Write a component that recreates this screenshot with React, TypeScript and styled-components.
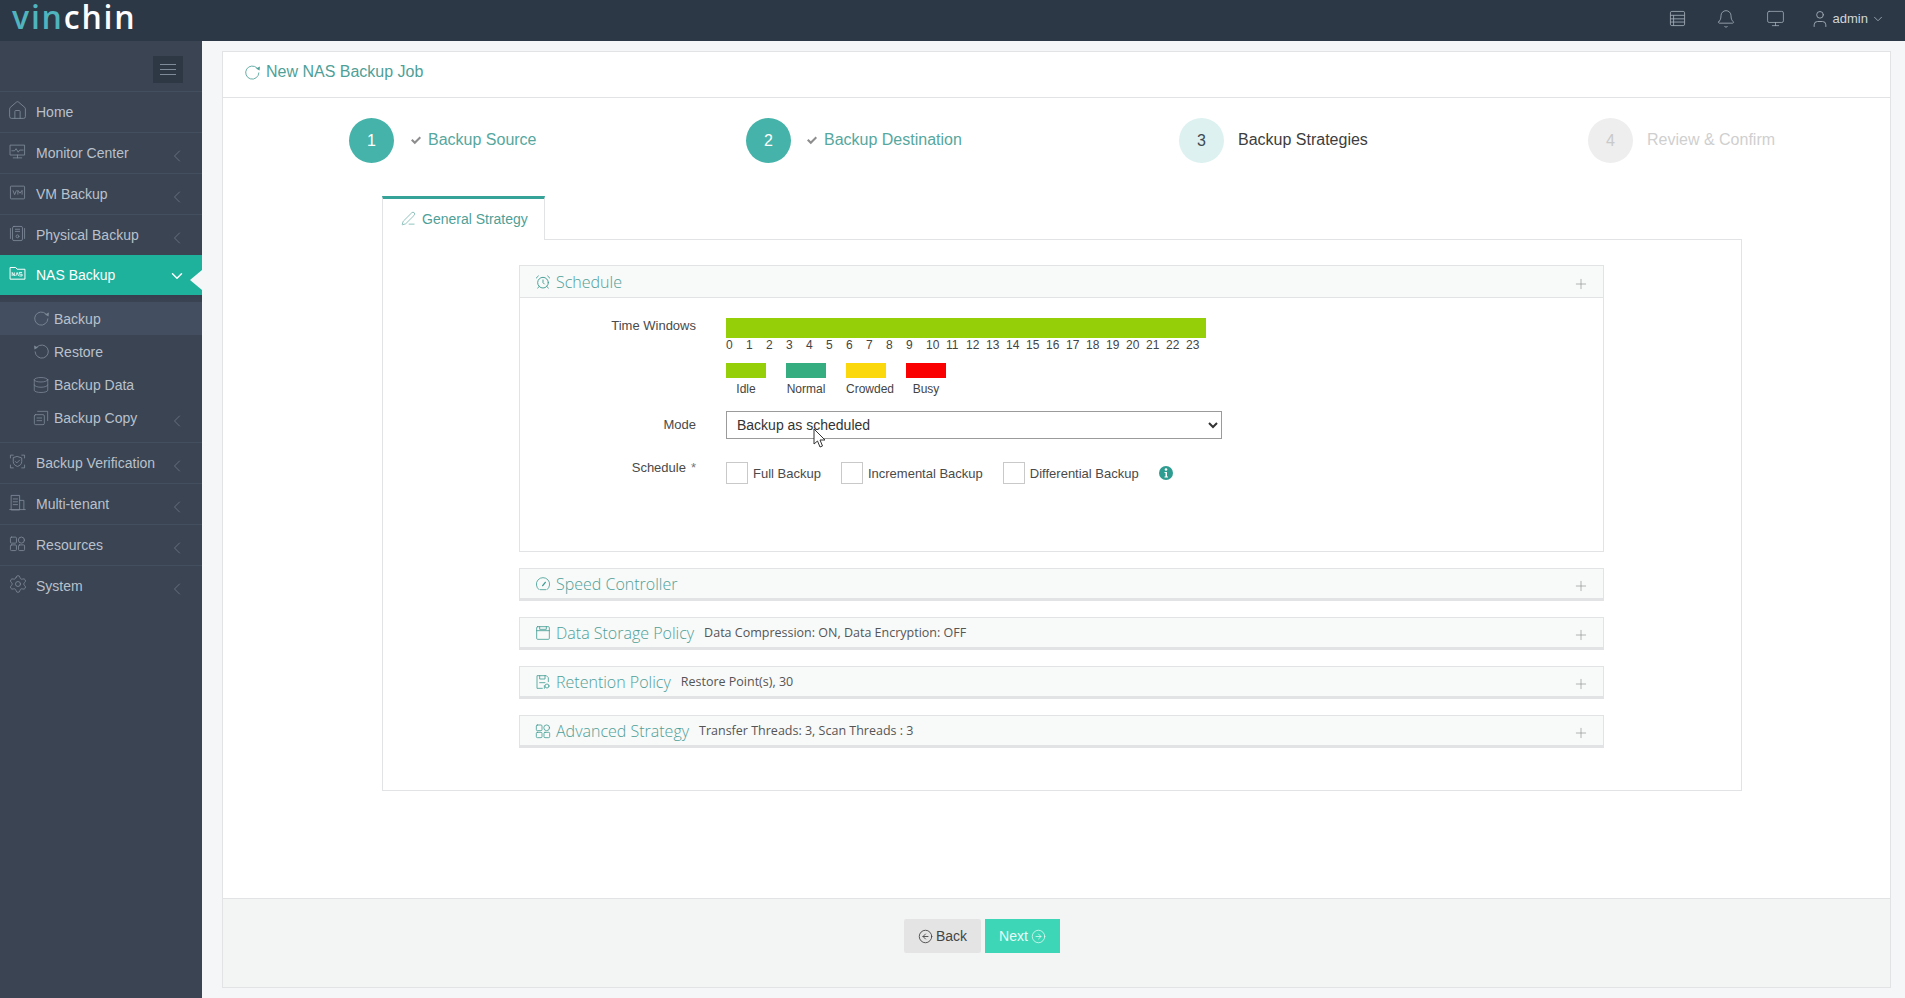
import React from 'react'
import styled, { createGlobalStyle } from 'styled-components'
import {
  AlarmClock,
  Bell,
  ChevronDown,
  ChevronLeft,
  CircleArrowLeft,
  CircleArrowRight,
  Database,
  House,
  Monitor,
  PenLine,
  Plus,
  Settings,
  User,
} from 'lucide-react'

const GlobalStyle = createGlobalStyle`
  * { box-sizing: border-box; }
  html, body { margin: 0; height: 100%; }
  body {
    background: #f5f6f7;
    font-family: "Liberation Sans", Arial, sans-serif;
    overflow: hidden;
  }
`

const Page = styled.div`
  height: 998px;
  display: grid;
  grid-template-rows: 41px 1fr;
  grid-template-columns: 202px 1fr;
`

/* top bar */
const TopBar = styled.header`
  grid-column: 1 / 3;
  background: #2c3846;
  display: flex;
  align-items: center;
  padding: 0 20px 0 12px;
  color: #a3adb8;
`

const Logo = styled.div`
  font-family: "Open Sans", sans-serif;
  font-size: 32px;
  font-weight: 600;
  line-height: 34px;
  letter-spacing: 1.8px;
  color: #fff;
  margin-top: -7px;
  span { color: #4fb4bd; }
`

const TopIcons = styled.div`
  margin-left: auto;
  margin-top: -4px;
  display: flex;
  align-items: center;
`

const TopIcon = styled.span<{ $gap: number }>`
  display: flex;
  margin-right: ${p => p.$gap}px;
`

const AdminName = styled.span`
  font-size: 13px;
  color: #cfd6dc;
  margin: 0 3px 0 3px;
`

/* side bar */
const Side = styled.nav`
  background: #3a4453;
  color: #b9c1cc;
  font-size: 14px;
`

const ToggleRow = styled.div`
  height: 51px;
  padding: 15px 19px 0 0;
  display: flex;
  justify-content: flex-end;
  border-bottom: 1px solid #434e5e;
`

const ToggleButton = styled.div`
  width: 30px;
  height: 27px;
  background: #2e3845;
  display: flex;
  flex-direction: column;
  justify-content: center;
  align-items: center;
  gap: 4px;
  i {
    display: block;
    width: 16px;
    height: 1px;
    background: #7f8a99;
  }
`

const NavRow = styled.div<{ $active?: boolean }>`
  position: relative;
  height: ${p => (p.$active ? 40 : 41)}px;
  margin-top: ${p => (p.$active ? -1 : 0)}px;
  display: flex;
  align-items: center;
  padding: 0 15px 0 9px;
  background: ${p => (p.$active ? '#1eb19c' : 'transparent')};
  color: ${p => (p.$active ? '#fff' : '#b9c1cc')};
  border-bottom: ${p => (p.$active ? '0' : '1px solid #434e5e')};
  &:last-child {
    height: 40px;
    border-bottom: 0;
  }
  &::after {
    content: '';
    display: ${p => (p.$active ? 'block' : 'none')};
    position: absolute;
    right: 0;
    top: 15px;
    border: 10px solid transparent;
    border-left-width: 0;
    border-right: 12px solid #f5f6f7;
  }
`

const NavIcon = styled.span<{ $active?: boolean }>`
  width: 17px;
  height: 17px;
  margin: -4px 10px 0 0;
  display: flex;
  align-items: center;
  justify-content: center;
  color: ${p => (p.$active ? '#fff' : '#7f8a99')};
  svg { flex: none; }
`

const Arrow = styled.span<{ $active?: boolean }>`
  margin-left: auto;
  display: flex;
  margin-top: ${p => (p.$active ? 2 : 6)}px;
  margin-right: ${p => (p.$active ? 1 : 0)}px;
  color: ${p => (p.$active ? '#fff' : '#6f7a89')};
`

const SubList = styled.div`
  padding-top: 7px;
  height: 148px;
  background: linear-gradient(#353f4d 0, #3a4453 8px);
  border-bottom: 1px solid #434e5e;
`

const SubRow = styled.div<{ $current?: boolean }>`
  height: 33px;
  display: flex;
  align-items: center;
  padding: 0 15px 0 33px;
  background: ${p => (p.$current ? '#434f60' : 'transparent')};
`

const SubIcon = styled.span`
  width: 16px;
  height: 16px;
  margin-right: 5px;
  display: flex;
  align-items: center;
  justify-content: center;
  color: #7f8a99;
  svg { flex: none; }
`

/* main */
const Main = styled.main`
  padding: 10px 14px 10px 20px;
  min-width: 0;
`

const Panel = styled.section`
  height: 100%;
  background: #fff;
  border: 1px solid #e2e3e4;
  display: flex;
  flex-direction: column;
`

const PanelHead = styled.h1`
  margin: 0;
  height: 46px;
  flex: none;
  border-bottom: 1px solid #e2e3e4;
  padding: 0 0 5px 21px;
  display: flex;
  align-items: center;
  gap: 5px;
  font-size: 16px;
  font-weight: 400;
  color: #4f9f97;
`

const Steps = styled.div`
  display: flex;
  padding: 20px 0 0 126px;
  height: 98px;
  flex: none;
`

const Step = styled.div<{ $width: number; $gap: number }>`
  width: ${p => p.$width}px;
  display: flex;
  align-items: flex-start;
  gap: ${p => p.$gap}px;
`

const StepCircle = styled.span<{ $state: 'done' | 'now' | 'todo' }>`
  width: 45px;
  height: 45px;
  flex: none;
  border-radius: 50%;
  display: flex;
  align-items: center;
  justify-content: center;
  font-size: 16px;
  background: ${p => ({ done: '#45b3a9', now: '#dcf1f0', todo: '#eeeeee' }[p.$state])};
  color: ${p => ({ done: '#fff', now: '#3e4a52', todo: '#c9c9c9' }[p.$state])};
`

const StepLabel = styled.span<{ $state: 'done' | 'now' | 'todo' }>`
  height: 43px;
  display: flex;
  align-items: center;
  gap: 6px;
  font-size: 16px;
  color: ${p => ({ done: '#56a79e', now: '#3d3d3d', todo: '#cfcfcf' }[p.$state])};
  svg { color: #8d8d8d; }
`

const Tabs = styled.div`
  margin: 0 148px 0 159px;
  flex: none;
`

const TabHead = styled.div`
  width: 163px;
  height: 44px;
  margin-bottom: -1px;
  position: relative;
  z-index: 1;
  background: #fff;
  border-top: 3px solid #36a398;
  border-left: 1px solid #e2e3e4;
  border-right: 1px solid #e2e3e4;
  padding: 0 0 2px 18px;
  display: flex;
  align-items: center;
  gap: 6px;
  font-size: 14px;
  color: #4f9f97;
`

const TabBody = styled.div`
  height: 552px;
  border: 1px solid #e2e3e4;
  padding: 25px 137px 0 136px;
`

const Acc = styled.div<{ $open?: boolean }>`
  border: 1px solid #e2e3e4;
  border-bottom: ${p => (p.$open ? 1 : 3)}px solid #e2e3e4;
  margin-bottom: 16px;
  background: #fff;
`

const AccHead = styled.div<{ $open?: boolean }>`
  height: ${p => (p.$open ? 32 : 29)}px;
  background: #f8f9f9;
  border-bottom: ${p => (p.$open ? '1px solid #e2e3e4' : '0')};
  display: flex;
  align-items: center;
  padding: 0 14px 0 15px;
  color: #3d9c92;
`

const AccTitle = styled.span`
  font-family: "Open Sans", sans-serif;
  font-size: 16px;
  font-weight: 300;
  margin-left: 5px;
  color: #4f9f97;
`

const AccNote = styled.span`
  font-family: "Open Sans", sans-serif;
  font-size: 12.5px;
  color: #555;
  margin-left: 10px;
`

const PlusMark = styled.span`
  margin-left: auto;
  margin-top: 4px;
  display: flex;
  color: #8e8e8e;
`

const AccBody = styled.div`
  height: 253px;
  padding-top: 20px;
  position: relative;
`

const FormRow = styled.div`
  display: grid;
  grid-template-columns: 176px 1fr;
  column-gap: 30px;
  font-size: 12px;
  color: #444;
`

const FieldLabel = styled.label`
  text-align: right;
  font-size: 13px;
  line-height: 16px;
  color: #4a4a4a;
`

const Hours = styled.div`
  width: 480px;
`

const HourBar = styled.div`
  height: 20px;
  background: #95cf07;
`

const HourScale = styled.div`
  display: grid;
  grid-template-columns: repeat(24, 20px);
  line-height: 14px;
  margin-bottom: 11px;
`

const Legend = styled.div`
  display: flex;
  gap: 20px;
`

const LegendItem = styled.div<{ $color: string }>`
  width: 40px;
  white-space: nowrap;
  display: flex;
  flex-direction: column;
  align-items: center;
  line-height: 14px;
  &::before {
    content: '';
    align-self: stretch;
    height: 15px;
    margin-bottom: 4px;
    background: ${p => p.$color};
  }
`

const LegendText = styled.span<{ $shift: number }>`
  margin-left: ${p => p.$shift}px;
`

const ModeRow = styled(FormRow)`
  margin-top: 15px;
  align-items: center;
`

const ModeSelect = styled.select`
  width: 496px;
  height: 28px;
  padding-left: 6px;
  border: 1px solid #9b9b9b;
  background: #fff;
  color: #333;
  font-family: "Liberation Sans", Arial, sans-serif;
  font-size: 14px;
`

const Pointer = styled.svg`
  position: absolute;
  left: 293px;
  top: 130px;
`

const ScheduleRow = styled(FormRow)`
  margin-top: 23px;
  ${FieldLabel} { margin-top: -2px; }
`

const Checks = styled.div`
  display: flex;
  align-items: center;
  height: 22px;
  font-size: 13px;
  color: #4a4a4a;
`

const CheckBox = styled.span`
  width: 22px;
  height: 22px;
  border: 1px solid #c9c9c9;
  margin-right: 5px;
`

const CheckLabel = styled.span`
  margin-right: 20px;
`

const Star = styled.span`
  margin-left: 5px;
  color: #777;
`

const InfoDot = styled.svg`
  color: #2f9c91;
`

/* footer */
const Footer = styled.div`
  margin-top: auto;
  height: 89px;
  background: #f3f4f4;
  border-top: 1px solid #e2e3e4;
  padding: 20px 0 0 681px;
  display: flex;
  align-items: flex-start;
  gap: 4px;
`

const FootButton = styled.button<{ $primary?: boolean }>`
  height: 34px;
  width: ${p => (p.$primary ? 75 : 77)}px;
  border: 0;
  border-radius: ${p => (p.$primary ? 0 : 2)}px;
  background: ${p => (p.$primary ? '#3dd6b6' : '#e4e4e4')};
  color: ${p => (p.$primary ? '#e8fbf6' : '#444')};
  font-family: "Liberation Sans", Arial, sans-serif;
  font-size: 14px;
  display: flex;
  align-items: center;
  justify-content: center;
  gap: 3px;
  padding: 0;
`

/* drawn icons */
const Line = ({ children, size = 17 }: { children: React.ReactNode; size?: number }) => (
  <svg
    width={size}
    height={size}
    viewBox="0 0 24 24"
    fill="none"
    stroke="currentColor"
    strokeWidth="1.2"
    strokeLinecap="round"
    strokeLinejoin="round"
  >
    {children}
  </svg>
)

const Turn = ({ size = 17 }: { size?: number }) => (
  <Line size={size}>
    <path d="M21 12.500a9.300 9.300 0 1 1-2.700-7" />
    <path d="M22.500 3.500l-.6 5.500-4.900-2.500z" fill="currentColor" stroke="none" />
  </Line>
)

const TurnBack = () => (
  <Line size={17}>
    <path d="M3 12.500a9.300 9.300 0 1 0 2.700-7" />
    <path d="M1.500 3.500l.6 5.500 4.900-2.500z" fill="currentColor" stroke="none" />
  </Line>
)

const Screen = () => (
  <Line>
    <rect x="2" y="3" width="20" height="14" />
    <path d="M4 11h4l2-3 3 5 2-3h5M6 21h12M12 17v4" />
  </Line>
)

const VmBox = () => (
  <svg width="17" height="17" viewBox="0 0 24 24" fill="none" stroke="currentColor" strokeWidth="1.2">
    <rect x="2" y="3" width="20" height="18" rx="1" />
    <path d="M5.500 9l2.500 6 2.500-6M12.500 15V9l3 4 3-4v6" />
  </svg>
)

const Tower = () => (
  <Line>
    <rect x="5" y="2" width="14" height="20" rx="2" />
    <path d="M2 5v14M22 5v14M9 6h6M9 9h6" />
    <circle cx="12" cy="16" r="2" />
  </Line>
)

const NasFolder = () => (
  <svg width="17" height="17" viewBox="0 0 24 24" fill="none" stroke="currentColor" strokeWidth="1.4">
    <path d="M1.500 20V3.500h8l2 2.500h11V20z" />
    <path d="M4.500 15.500v-5l3 5v-5M9.500 15.500l2-5 2 5M14.500 15.500h4v-2.500h-4v-2.500h4" strokeWidth="1.200" />
  </svg>
)

const CopyStack = () => (
  <Line size={16}>
    <rect x="2" y="7" width="15" height="15" rx="2" />
    <path d="M7 2h15v14M6 12h7M6 16h7" />
  </Line>
)

const Shield = () => (
  <Line>
    <path d="M2 7V3h4M18 3h4v4M2 17v4h4M18 21h4v-4" />
    <path d="M12 5l6 2v5c0 4-3 6-6 7-3-1-6-3-6-7V7z" />
    <path d="M9 12l2 2 4-4" />
  </Line>
)

const Tenant = () => (
  <Line>
    <path d="M3 22V2h12v20zM15 9h6v13M1 22h22M6 7h6M6 11h6M6 15h6" />
  </Line>
)

const Blocks = ({ size = 17 }: { size?: number }) => (
  <Line size={size}>
    <rect x="2" y="3" width="8.500" height="8.500" rx="1.500" />
    <circle cx="17.500" cy="7.200" r="4.300" />
    <rect x="2" y="14" width="8.500" height="8" rx="1.500" />
    <rect x="13.500" y="14" width="8.500" height="8" rx="1.500" />
  </Line>
)

const ListSheet = () => (
  <svg width="17" height="17" viewBox="0 0 24 24" fill="none" stroke="currentColor" strokeWidth="1.200">
    <rect x="2" y="2" width="20" height="20" rx="2" />
    <path d="M2 7.500h20M2 12.500h20M2 17h20M6.500 7.500V22" />
  </svg>
)

const Floppy = () => (
  <Line size={16}>
    <rect x="2.500" y="2.500" width="19" height="19" rx="1.500" />
    <path d="M2.500 8.500h19M7 2.500v4h10v-4" />
  </Line>
)

const FloppyChart = () => (
  <Line size={16}>
    <path d="M11 21.500H3V2.500h14l3 3v6M7 2.500v5h8v-5M7 13h8" />
    <circle cx="18" cy="18" r="3" />
    <path d="M14 21.500v-4" />
  </Line>
)

const Dial = () => (
  <Line size={16}>
    <path d="M6 20.500a10 10 0 1 1 12 0" />
    <path d="M11.500 14.500l4-5" strokeWidth="2" />
    <path d="M8 20.500h8" />
  </Line>
)

const Tick = () => (
  <svg width="12" height="12" viewBox="0 0 12 12" fill="currentColor">
    <path d="M1 6.500l1.500-1.500 2.300 2.300L9.600 2.500 11 4 4.800 10.200z" />
  </svg>
)

const LeftArrow = () => <ChevronLeft size={20} strokeWidth={1} />

const navTop = [
  { label: 'Home', icon: <House size={21} strokeWidth={1} /> },
  { label: 'Monitor Center', icon: <Screen />, arrow: true },
  { label: 'VM Backup', icon: <VmBox />, arrow: true },
  { label: 'Physical Backup', icon: <Tower />, arrow: true },
]

const navSub = [
  { label: 'Backup', icon: <Turn />, current: true },
  { label: 'Restore', icon: <TurnBack /> },
  { label: 'Backup Data', icon: <Database size={18} strokeWidth={1} /> },
  { label: 'Backup Copy', icon: <CopyStack />, arrow: true },
]

const navRest = [
  { label: 'Backup Verification', icon: <Shield /> },
  { label: 'Multi-tenant', icon: <Tenant /> },
  { label: 'Resources', icon: <Blocks /> },
  { label: 'System', icon: <Settings size={20} strokeWidth={1} /> },
]

const steps = [
  { n: 1, label: 'Backup Source', state: 'done', width: 397, gap: 16 },
  { n: 2, label: 'Backup Destination', state: 'done', width: 433, gap: 15 },
  { n: 3, label: 'Backup Strategies', state: 'now', width: 409, gap: 14 },
  { n: 4, label: 'Review & Confirm', state: 'todo', width: 300, gap: 14 },
] as const

const legend = [
  { label: 'Idle', color: '#95cf07', shift: 0 },
  { label: 'Normal', color: '#36ad80', shift: 0 },
  { label: 'Crowded', color: '#fbd80c', shift: 8 },
  { label: 'Busy', color: '#fb0000', shift: 0 },
]

const closedPanels = [
  { title: 'Speed Controller', icon: <Dial /> },
  { title: 'Data Storage Policy', icon: <Floppy />, note: 'Data Compression: ON, Data Encryption: OFF' },
  { title: 'Retention Policy', icon: <FloppyChart />, note: 'Restore Point(s), 30' },
  { title: 'Advanced Strategy', icon: <Blocks size={16} />, note: 'Transfer Threads: 3, Scan Threads : 3' },
]

const App = () => {
  return (
    <Page>
      <GlobalStyle />
      <TopBar>
        <Logo>
          <span>vin</span>chin
        </Logo>
        <TopIcons>
          <TopIcon $gap={30}>
            <ListSheet />
          </TopIcon>
          <TopIcon $gap={30}>
            <Bell size={20} strokeWidth={1} />
          </TopIcon>
          <TopIcon $gap={25}>
            <Monitor size={19} strokeWidth={1} />
          </TopIcon>
          <TopIcon $gap={0}>
            <User size={20} strokeWidth={1.1} />
          </TopIcon>
          <AdminName>admin</AdminName>
          <ChevronDown size={14} strokeWidth={1.5} />
        </TopIcons>
      </TopBar>

      <Side>
        <ToggleRow>
          <ToggleButton>
            <i />
            <i />
            <i />
          </ToggleButton>
        </ToggleRow>
        {navTop.map(item => (
          <NavRow key={item.label}>
            <NavIcon>{item.icon}</NavIcon>
            {item.label}
            {item.arrow && (
              <Arrow>
                <LeftArrow />
              </Arrow>
            )}
          </NavRow>
        ))}
        <NavRow $active>
          <NavIcon $active>
            <NasFolder />
          </NavIcon>
          NAS Backup
          <Arrow $active>
            <ChevronDown size={18} strokeWidth={2} />
          </Arrow>
        </NavRow>
        <SubList>
          {navSub.map(item => (
            <SubRow key={item.label} $current={item.current}>
              <SubIcon>{item.icon}</SubIcon>
              {item.label}
              {item.arrow && (
                <Arrow>
                  <LeftArrow />
                </Arrow>
              )}
            </SubRow>
          ))}
        </SubList>
        {navRest.map(item => (
          <NavRow key={item.label}>
            <NavIcon>{item.icon}</NavIcon>
            {item.label}
            <Arrow>
              <LeftArrow />
            </Arrow>
          </NavRow>
        ))}
      </Side>

      <Main>
        <Panel>
          <PanelHead>
            <Turn />
            New NAS Backup Job
          </PanelHead>
          <Steps>
            {steps.map(step => (
              <Step key={step.n} $width={step.width} $gap={step.gap}>
                <StepCircle $state={step.state}>{step.n}</StepCircle>
                <StepLabel $state={step.state}>
                  {step.state === 'done' && <Tick />}
                  {step.label}
                </StepLabel>
              </Step>
            ))}
          </Steps>
          <Tabs>
            <TabHead>
              <PenLine size={15} strokeWidth={1} />
              General Strategy
            </TabHead>
            <TabBody>
              <Acc $open>
                <AccHead $open>
                  <AlarmClock size={16} strokeWidth={1.4} />
                  <AccTitle>Schedule</AccTitle>
                  <PlusMark>
                    <Plus size={16} strokeWidth={1} />
                  </PlusMark>
                </AccHead>
                <AccBody>
                  <FormRow>
                    <FieldLabel>Time Windows</FieldLabel>
                    <Hours>
                      <HourBar />
                      <HourScale>
                        {Array.from({ length: 24 }, (_, h) => (
                          <span key={h}>{h}</span>
                        ))}
                      </HourScale>
                      <Legend>
                        {legend.map(item => (
                          <LegendItem key={item.label} $color={item.color}>
                            <LegendText $shift={item.shift}>{item.label}</LegendText>
                          </LegendItem>
                        ))}
                      </Legend>
                    </Hours>
                  </FormRow>
                  <ModeRow>
                    <FieldLabel>Mode</FieldLabel>
                    <ModeSelect defaultValue="scheduled">
                      <option value="scheduled">Backup as scheduled</option>
                    </ModeSelect>
                  </ModeRow>
                  <Pointer width="14" height="20" viewBox="0 0 14 20">
                    <path d="M1 1v15l3.500-3 2.500 6 2.500-1-2.500-6h5z" fill="#fff" stroke="#333" strokeWidth="1" />
                  </Pointer>
                  <ScheduleRow>
                    <FieldLabel>
                      Schedule<Star>*</Star>
                    </FieldLabel>
                    <Checks>
                      <CheckBox />
                      <CheckLabel>Full Backup</CheckLabel>
                      <CheckBox />
                      <CheckLabel>Incremental Backup</CheckLabel>
                      <CheckBox />
                      <CheckLabel>Differential Backup</CheckLabel>
                      <InfoDot width="14" height="14" viewBox="0 0 14 14">
                        <circle cx="7" cy="7" r="7" fill="currentColor" />
                        <circle cx="7" cy="3.500" r="1.300" fill="#fff" />
                        <path d="M5.500 6h2.500v4.500h1v1H5.500v-1h1V7h-1z" fill="#fff" />
                      </InfoDot>
                    </Checks>
                  </ScheduleRow>
                </AccBody>
              </Acc>
              {closedPanels.map(panel => (
                <Acc key={panel.title}>
                  <AccHead>
                    {panel.icon}
                    <AccTitle>{panel.title}</AccTitle>
                    {panel.note && <AccNote>{panel.note}</AccNote>}
                    <PlusMark>
                      <Plus size={16} strokeWidth={1} />
                    </PlusMark>
                  </AccHead>
                </Acc>
              ))}
            </TabBody>
          </Tabs>
          <Footer>
            <FootButton>
              <CircleArrowLeft size={15} strokeWidth={1.4} />
              Back
            </FootButton>
            <FootButton $primary>
              Next
              <CircleArrowRight size={15} strokeWidth={1.2} />
            </FootButton>
          </Footer>
        </Panel>
      </Main>
    </Page>
  )
}

export default App
